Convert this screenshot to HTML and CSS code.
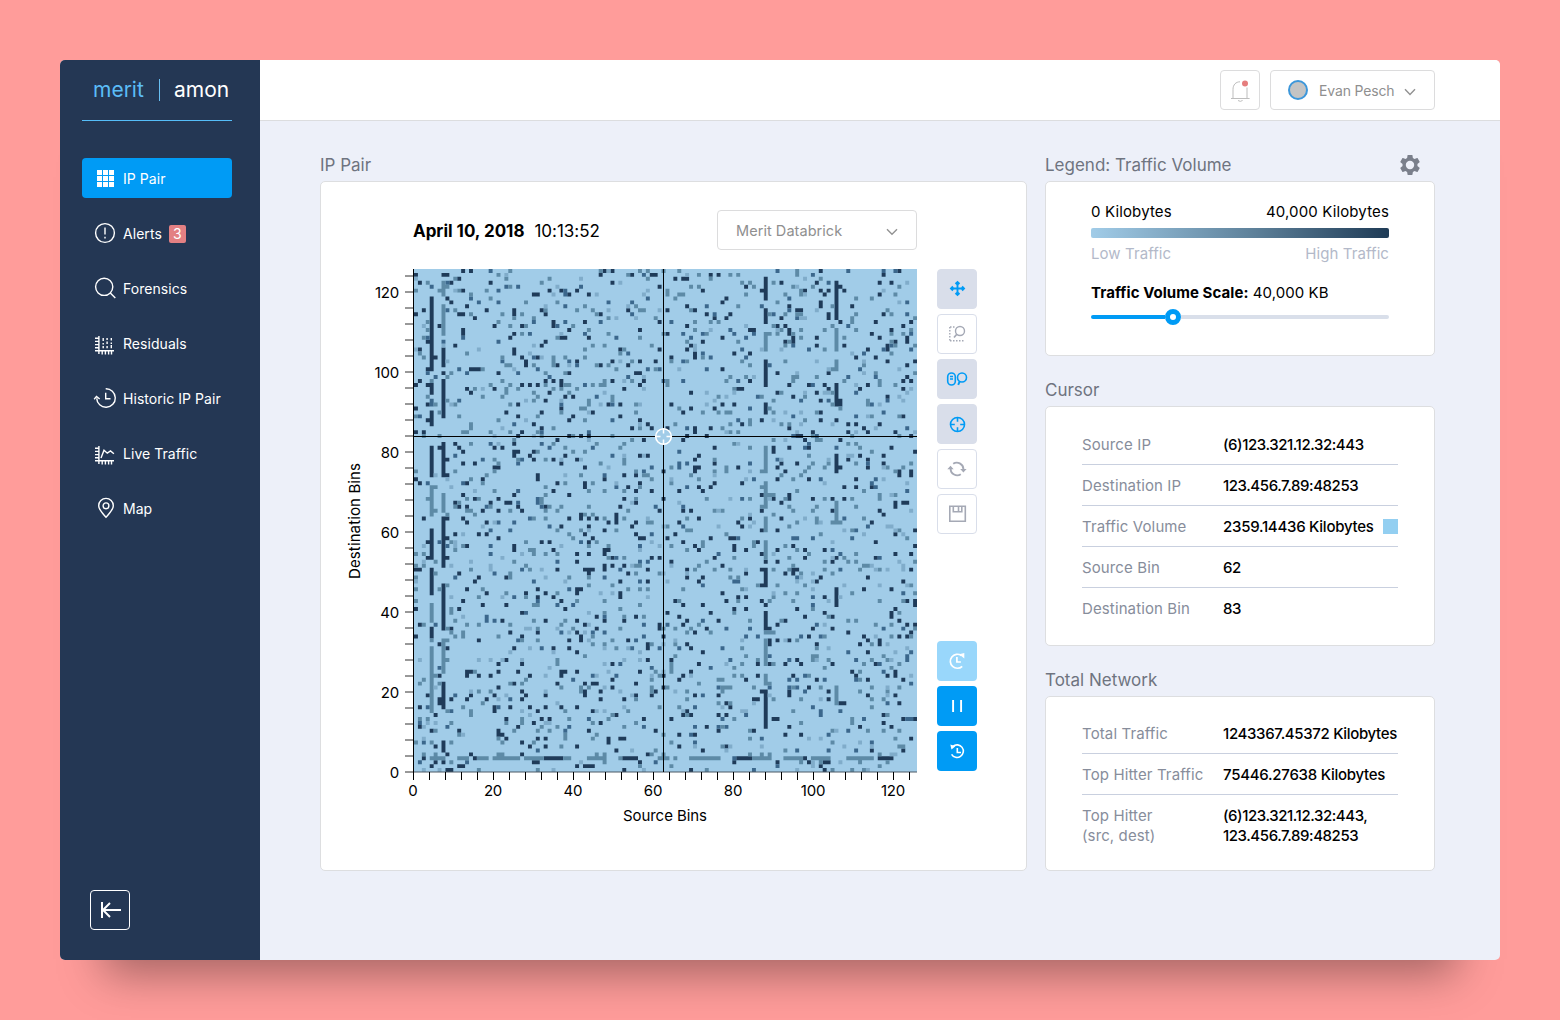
FILE: index.html
```html
<!DOCTYPE html>
<html lang="en">
<head>
<meta charset="utf-8">
<title>Merit Amon – IP Pair</title>
<link rel="stylesheet" href="styles.css">
</head>
<body>
<div class="app">
  <aside class="sidebar">
    <div class="logo"><span class="logo-merit">merit</span><span class="logo-sep"></span><span class="logo-amon">amon</span></div>
    <nav class="nav">
      <a class="nav-item active">
        <svg class="nav-icon" viewBox="0 0 24 24"><g fill="#fff"><path d="M4 4h5v5H4zM10 4h5v5h-5zM16 4h5v5h-5zM4 10h5v5H4zM10 10h5v5h-5zM16 10h5v5h-5zM4 16h5v5H4zM10 16h5v5h-5zM16 16h5v5h-5z"/></g></svg>
        IP Pair</a>
      <a class="nav-item">
        <svg class="nav-icon" viewBox="0 0 24 24"><circle cx="12" cy="12" r="9.4"/><path d="M12 6.5v7M12 15.8v1.700"/></svg>
        Alerts<span class="badge">3</span></a>
      <a class="nav-item">
        <svg class="nav-icon" viewBox="0 0 24 24"><circle cx="11.2" cy="10.8" r="8.6"/><path d="M17.3 16.9l5 5"/></svg>
        Forensics</a>
      <a class="nav-item">
        <svg class="nav-icon shift" viewBox="0 0 24 24"><path d="M5.9 3v18M2 17.8h19M2 5.200h4M2 8.400h4M2 11.600h4M2 14.800h4M9.2 18v3.500M12.4 18v3.500M15.6 18v3.500M18.500 18v3.500"/><path d="M10.2 5v3M10.2 10v1.6M10.2 13v2.2M14.1 5v2M14.1 8.5v2.6M14.1 13v2.2M18.3 5v2.6M18.3 9.4v1.6M18.3 12v3.2"/></svg>
        Residuals</a>
      <a class="nav-item">
        <svg class="nav-icon" viewBox="0 0 24 24"><path d="M12.7 2.700a9.3 9.3 0 1 1-9 9.700M1.200 13.200l2.300-2.800 3.200 2.600M12.7 6.800v6h4.8"/></svg>
        Historic IP Pair</a>
      <a class="nav-item">
        <svg class="nav-icon shift" viewBox="0 0 24 24"><path d="M5.9 3v18M2 17.800h19M2 5.200h4M2 8.400h4M2 11.600h4M2 14.800h4M9.2 18v3.500M12.4 18v3.500M15.6 18v3.500M18.500 18v3.500"/><path d="M8 15l3-7.8 3.3 3 3.2-2.2 3.4 2.8"/></svg>
        Live Traffic</a>
      <a class="nav-item">
        <svg class="nav-icon" viewBox="0 0 24 24"><path d="M13 21.3c-4-4.6-7.3-7.7-7.3-11.6a7.3 7.3 0 0 1 14.6 0c0 3.900-3.300 7-7.300 11.600z"/><circle cx="13" cy="9.800" r="2.900"/></svg>
        Map</a>
    </nav>
    <button class="collapse"><svg width="24" height="24" viewBox="0 0 24 24"><path d="M4 4v16M5 12h18M12 5l-7 7 7 7"/></svg></button>
  </aside>

  <div class="page">
    <header class="topbar">
      <button class="bell"><svg width="24" height="24" viewBox="0 0 24 24"><path d="M5 20v-8.500c0-4.800 2.900-7.700 7-7.700M19 9.500v10.500M3 20.500h18.600M10 22.500q2.300 1.700 4.600 0"/><circle cx="17" cy="5.600" r="3"/></svg></button>
      <button class="user"><span class="avatar"></span><span class="user-name">Evan Pesch</span><svg class="chev" width="12" height="8" viewBox="0 0 12 8"><path d="M1 1.200l5 5.300 5-5.300"/></svg></button>
    </header>

    <main class="content">
      <section class="pair">
        <h2 class="title">IP Pair</h2>
        <div class="card chart-card">
          <div class="chart-head">
            <p class="stamp"><b>April 10, 2018</b><span>10:13:52</span></p>
            <button class="select"><span>Merit Databrick</span><svg class="chev" width="12" height="8" viewBox="0 0 12 8"><path d="M1 1.200l5 5 5-5"/></svg></button>
          </div>
          <div class="chart-body">
            <svg class="chart" width="576" height="560" viewBox="341 269 576 560">
              <rect x="413" y="269" width="504" height="503" fill="#a1cce8"/>
              <g id="cells"></g>
              <path class="base-line" d="M413 772h504"/>
              <path id="y-ticks" class="y-ticks"/>
              <path id="x-ticks" class="x-ticks"/>
              <path class="axis" d="M413.500 269v503.500"/>
              <path class="axis" d="M663.500 269v503M413 436.500h504"/>
              <g id="labels" class="labels"></g>
              <text class="axis-name" x="665" y="821" textLength="84">Source Bins</text>
              <text class="axis-name" x="0" y="0" textLength="116" transform="translate(360 521) rotate(-90)">Destination Bins</text>
              <circle cx="663.500" cy="436.500" r="7.800" fill="#a1cce8" stroke="#fff" stroke-width="1.600"/>
              <path d="M663.500 429v4.500M663.500 439.500v4.500M656 436.500h4.500M666.500 436.500h4.500" stroke="#fff" stroke-width="1.500"/>
            </svg>
            <div class="tools">
              <button class="tool on"><svg viewBox="0 0 24 24"><path d="M12.500 5v13M6 11.500h13M10.500 7l2-2 2 2M10.500 16l2 2 2-2M8 9.500l-2 2 2 2M17 9.500l2 2-2 2" stroke-width="1.900"/></svg></button>
              <button class="tool"><svg viewBox="0 0 24 24"><path d="M5 5h5M4.800 5v14.500M5 18.700h15" stroke-dasharray="1.500 1.500"/><circle cx="15" cy="9" r="4.500"/><path d="M11.800 12.200L9 15.500" stroke-width="1.700"/></svg></button>
              <button class="tool on"><svg viewBox="0 0 24 24"><rect x="2.700" y="6" width="7.600" height="12" rx="3.800"/><path d="M5 9.500h3M5 12h3"/><circle cx="17" cy="10.500" r="4.500"/><path d="M14.700 14.300l-1.500 3.500" stroke-width="1.900"/></svg></button>
              <button class="tool on"><svg viewBox="0 0 24 24"><circle cx="12.500" cy="12.500" r="7"/><path d="M12.500 5.500v4.300M12.500 15.200v4.300M5.500 12.500h4.300M15.200 12.500h4.300"/></svg></button>
              <button class="tool"><svg viewBox="0 0 24 24"><path d="M8.200 6.800a6.600 6.600 0 0 1 10.200 5.200M15.800 17.200a6.600 6.600 0 0 1-10.200-5.500" stroke-width="1.900"/><path d="M2.300 12.300h6.400L5.500 8.800zM15.200 12h6.400l-3.200 3.600z" fill="#a5a9b5" stroke="none"/></svg></button>
              <button class="tool"><svg viewBox="0 0 24 24"><path d="M4.800 4.200h15.500v15H4.800zM8.300 4.200v5.500h8.500V4.200M13.500 4.700v4.500" stroke-width="1.600"/></svg></button>
              <span class="spring"></span>
              <button class="tool blue faded"><svg viewBox="0 0 24 24"><path d="M17.200 17.300A7 7 0 1 1 16.300 6.500M11.900 8v5h4" stroke-width="1.700"/><path d="M14 5.200l5.300-1.200v5.600z" fill="#fff" stroke="none"/></svg></button>
              <button class="tool blue"><svg viewBox="0 0 24 24"><path d="M8.100 6v12M16.100 6v12" stroke-width="1.900"/></svg></button>
              <button class="tool blue"><svg viewBox="0 0 24 24"><path d="M8 7.300a6.300 6.300 0 1 1-1.400 8M12.300 9v4.500H16" stroke-width="1.600"/><path d="M5.300 5.400l1.200 5 4-3.200z" fill="#fff" stroke="none"/></svg></button>
            </div>
          </div>
        </div>
      </section>

      <div class="side">
        <section>
          <div class="title-row"><h2 class="title">Legend: Traffic Volume</h2>
            <svg class="gear" width="24" height="24" viewBox="0 0 24 24"><path d="M19.430 12.980c.04-.32.07-.64.07-.98s-.03-.66-.07-.98l2.110-1.650c.19-.15.24-.42.12-.64l-2-3.460c-.12-.22-.39-.3-.61-.22l-2.490 1c-.52-.4-1.080-.73-1.690-.98l-.38-2.650C14.460 2.180 14.250 2 14 2h-4c-.25 0-.46.18-.49.42l-.38 2.650c-.61.25-1.170.59-1.690.98l-2.490-1c-.23-.09-.49 0-.61.22l-2 3.460c-.13.22-.07.49.12.64l2.110 1.650c-.04.32-.07.65-.07.98s.03.66.07.98l-2.110 1.650c-.19.15-.24.42-.12.64l2 3.460c.12.22.39.3.61.22l2.490-1c.52.4 1.080.73 1.690.98l.38 2.650c.03.24.24.42.49.42h4c.25 0 .46-.18.49-.42l.38-2.650c.61-.25 1.170-.59 1.690-.98l2.490 1c.23.09.49 0 .61-.22l2-3.460c.12-.22.07-.49-.12-.64l-2.110-1.650zM12 16.200a4.200 4.200 0 1 1 0-8.400 4.200 4.200 0 0 1 0 8.400z"/></svg>
          </div>
          <div class="card legend">
            <div class="ends"><span class="wide">0 Kilobytes</span><span class="wide">40,000 Kilobytes</span></div>
            <div class="ramp"></div>
            <div class="ends hint"><span>Low Traffic</span><span>High Traffic</span></div>
            <p class="scale"><b>Traffic Volume Scale:</b> 40,000 KB</p>
            <div class="slider"><span class="fill"></span><span class="knob"></span><span class="rest"></span></div>
          </div>
        </section>

        <section>
          <h2 class="title">Cursor</h2>
          <dl class="card facts cursor">
            <div class="row"><dt>Source IP</dt><dd class="t3">(6)123.321.12.32:443</dd></div>
            <div class="row"><dt>Destination IP</dt><dd class="t3">123.456.7.89:48253</dd></div>
            <div class="row"><dt>Traffic Volume</dt><dd class="t1">2359.14436 Kilobytes</dd><span class="swatch"></span></div>
            <div class="row"><dt>Source Bin</dt><dd class="t3">62</dd></div>
            <div class="row"><dt>Destination Bin</dt><dd class="t3">83</dd></div>
          </dl>
        </section>

        <section>
          <h2 class="title">Total Network</h2>
          <dl class="card facts total">
            <div class="row"><dt>Total Traffic</dt><dd class="t2">1243367.45372 Kilobytes</dd></div>
            <div class="row"><dt>Top Hitter Traffic</dt><dd class="t1">75446.27638 Kilobytes</dd></div>
            <div class="row tall"><dt>Top Hitter<br>(src, dest)</dt><dd class="t3">(6)123.321.12.32:443,<br>123.456.7.89:48253</dd></div>
          </dl>
        </section>
      </div>
    </main>
  </div>
</div>
<script src="chart.js"></script>
</body>
</html>
```
FILE: styles.css
```css
* { box-sizing: border-box; }
body { margin: 0; padding: 60px; height: 1020px; overflow: hidden; background: #ff9c9a; font: 400 15px/20px Inter, "Liberation Sans", sans-serif; color: #000; }
h2, p, dl, dd, dt { margin: 0; font-weight: 400; }
button { padding: 0; font: inherit; display: flex; align-items: center; justify-content: center; }
svg { display: block; fill: none; }

.app { display: flex; width: 1440px; height: 900px; border-radius: 5px; background: #edf0f9; box-shadow: 0 58px 42px -44px rgba(0, 0, 0, .36); }

.sidebar { width: 200px; background: #243754; border-radius: 5px 0 0 5px; padding: 0 28px 30px 22px; display: flex; flex-direction: column; color: #fff; }
.logo { height: 61px; border-bottom: 1px solid #55bdf9; display: flex; align-items: center; padding: 0 0 0 11px; font-size: 21px; }
.logo-merit { color: #5bbcf7; width: 66px; }
.logo-sep { width: 1px; height: 22px; background: #68bff2; margin-right: 14px; }
.nav { display: flex; flex-direction: column; gap: 15px; margin-top: 37px; flex: 1; }
.nav-item { height: 40px; border-radius: 4px; display: flex; align-items: center; padding: 2px 0 0 11px; font-size: 14px; letter-spacing: .05px; white-space: nowrap; }
.nav-item.active { background: #009bf5; }
.nav-icon { width: 24px; height: 24px; margin: -2px 6px 0 0; stroke: #fff; stroke-width: 1.4; }
.nav-icon.shift { margin-top: 1px; }
.active .nav-icon { stroke: none; }
.badge { width: 17px; height: 18px; margin: 0 0 0 7px; border-radius: 2px; background: #e38083; display: flex; align-items: center; justify-content: center; line-height: 18px; }
.collapse { width: 40px; height: 40px; margin-left: 8px; background: none; border: 1px solid #fff; border-radius: 4px; }
.collapse svg { stroke: #fff; stroke-width: 2; margin-left: -1px; }

.page { flex: 1; display: flex; flex-direction: column; }
.topbar { height: 61px; background: #fff; border-bottom: 1px solid #dcdddf; border-radius: 0 5px 0 0; display: flex; justify-content: flex-end; align-items: center; gap: 10px; padding-right: 65px; }
.bell, .user, .select { height: 40px; background: #fff; border: 1px solid #dcdcdd; border-radius: 4px; color: #8f8f8f; }
.bell { width: 40px; }
.bell path { stroke: #bdbdbd; stroke-width: 1; }
.bell circle { fill: #e57d7d; }
.user { width: 165px; justify-content: flex-start; padding-left: 17px; font-size: 14px; letter-spacing: -.15px; }
.avatar { width: 20px; height: 20px; border-radius: 50%; border: 2px solid #3d97da; background: #c4c4c4; margin-right: 11px; }
.user-name { width: 85px; text-align: left; padding-top: 1px; }
.chev { stroke: #929292; stroke-width: 1.4; margin-top: 3px; }

.content { display: flex; gap: 18px; padding: 29px 65px 0 60px; }
.title { font-size: 17px; line-height: 31px; height: 31px; color: #6f7480; }
.card { background: #fff; border: 1px solid #dddee0; border-radius: 5px; }
.pair { width: 707px; }
.chart-card { height: 690px; padding: 28px 49px 0 20px; }
.chart-head { display: flex; justify-content: space-between; padding: 0 60px 0 72px; height: 59px; }
.stamp { font-size: 17px; line-height: 43px; display: flex; gap: 10px; letter-spacing: -.02px; }
.select { width: 200px; justify-content: space-between; padding: 0 18px; font-size: 14.5px; letter-spacing: .05px; }
.select span { padding-top: 2px; }
.chart-body { display: flex; gap: 20px; }
.chart { flex: none; }
.axis { stroke: #000; stroke-width: 1; }
.base-line { stroke: #4d5a66; stroke-width: 1; }
.y-ticks { stroke: #333; stroke-width: 1; }
.x-ticks { stroke: #000; stroke-width: 1; }
.labels, .axis-name { font-size: 15px; fill: #000; }
.labels { letter-spacing: -.2px; }
.axis-name { text-anchor: middle; }
.tools { width: 40px; height: 502px; display: flex; flex-direction: column; gap: 5px; }
.tool { width: 40px; height: 40px; flex: none; border: 1px solid #d9deea; border-radius: 4px; background: #fff; }
.tool svg { width: 24px; height: 24px; stroke: #a5a9b5; stroke-width: 1.4; }
.tool.on { background: #d9deea; }
.tool.on svg { stroke: #009bf5; stroke-width: 1.6; }
.tool.blue { background: #009bf5; border: 0; }
.tool.blue svg { stroke: #fff; }
.tool.faded { background: #99d7fb; }
.spring { flex: 1; }

.side { width: 390px; display: flex; flex-direction: column; gap: 19px; }
.title-row { display: flex; justify-content: space-between; align-items: center; padding-right: 13px; }
.gear { fill: #7a7f8b; margin-top: -2px; }
.legend { height: 175px; padding: 20px 45px 0; }
.ends { display: flex; justify-content: space-between; }
.wide { letter-spacing: .14px; }
.ramp { height: 10px; margin: 6px 0; border-radius: 2px; background: linear-gradient(90deg, #a1cce8, #5d8099 55%, #1f3b56); }
.hint { color: #b3b9c9; letter-spacing: .08px; }
.scale { margin-top: 19px; letter-spacing: .06px; }
.slider { display: flex; align-items: center; height: 16px; margin-top: 6px; }
.fill { width: 74px; height: 4px; border-radius: 2px 0 0 2px; background: #009bf5; }
.knob { width: 16px; height: 16px; border: 5px solid #009bf5; border-radius: 50%; background: #fff; }
.rest { flex: 1; height: 4px; border-radius: 0 2px 2px 0; background: #d9dfea; }

.facts { padding: 17px 36px 0; }
.cursor { height: 240px; }
.total { height: 175px; padding-top: 16px; }
.row { display: flex; align-items: center; height: 41px; padding-top: 2px; border-bottom: 1px solid #c9d0df; }
.row:last-child { border-bottom: 0; padding-top: 1px; }
.row.tall { height: 60px; padding-top: 2px; }
.row dt { width: 141px; color: #878d9b; letter-spacing: .12px; }
.row dd { font-weight: 450; white-space: nowrap; }
.t1 { letter-spacing: -.26px; }
.t2 { letter-spacing: -.34px; }
.t3 { letter-spacing: -.43px; }
.swatch { width: 15px; height: 15px; margin: -2px 0 0 auto; background: #93cff1; }
```
FILE: chart.js
```js
const NS = 'http://www.w3.org/2000/svg';
const X0 = 414, Y0 = 269, SIZE = 3.93, N = 128;
const DARK = '#1f3b59', BLUE = '#3b678c', MID = '#5d8aa6', PALE = '#80acca';

// Deterministic generator, so the traffic sample is the same on every load.
let seed = 20180410;
function rnd() {
  seed = (seed + 0x6d2b79f5) | 0;
  let t = Math.imul(seed ^ (seed >>> 15), 1 | seed);
  t = (t + Math.imul(t ^ (t >>> 7), 61 | t)) ^ t;
  return ((t ^ (t >>> 14)) >>> 0) / 4294967296;
}

const grid = {};
for (let y = 0; y < N; y++) {
  for (let x = 0; x < N; x++) {
    if (rnd() < 0.13) {
      const k = rnd();
      grid[x + ',' + y] = k < 0.37 ? DARK : k < 0.52 ? BLUE : k < 0.86 ? MID : PALE;
    }
  }
}

// Busy source bins: [column, from y, to y, colour] in chart pixels.
const busy = [
  [4, 297, 371, DARK], [4, 382, 396, DARK], [4, 400, 407, BLUE], [4, 411, 426, DARK],
  [4, 445, 477, DARK], [4, 485, 518, MID], [4, 528, 558, DARK], [4, 568, 597, DARK],
  [4, 604, 622, MID], [4, 626, 640, DARK], [4, 645, 712, MID],
  [7, 281, 297, MID], [7, 305, 335, MID], [7, 348, 367, DARK], [7, 379, 417, DARK],
  [7, 440, 478, DARK], [7, 492, 512, MID], [7, 518, 566, DARK], [7, 585, 632, DARK],
  [7, 640, 672, MID], [7, 682, 709, DARK], [7, 740, 752, DARK],
  [89, 277, 302, DARK], [89, 308, 325, DARK], [89, 333, 352, MID], [89, 361, 386, DARK],
  [89, 402, 414, DARK], [89, 445, 473, MID], [89, 481, 508, MID], [89, 516, 532, MID],
  [89, 540, 558, MID], [89, 566, 588, DARK], [89, 612, 632, DARK], [89, 640, 664, MID],
  [89, 672, 684, MID], [89, 690, 730, DARK],
  [107, 281, 320, DARK], [107, 328, 350, MID], [107, 360, 372, MID], [107, 384, 408, DARK],
  [107, 452, 472, DARK], [107, 500, 524, MID], [107, 592, 608, DARK], [107, 684, 704, MID]
];
for (const [col, a, b, c] of busy) {
  for (let y = Math.round((a - Y0) / SIZE); y < Math.round((b - Y0) / SIZE); y++) grid[col + ',' + y] = c;
}
// Busy destination bin near the bottom: [from column, to column, colour].
const band = [[4, 8, MID], [11, 14, MID], [16, 19, MID], [21, 27, MID], [28, 33, MID], [33, 38, DARK],
  [38, 40, MID], [44, 49, MID], [53, 57, DARK], [62, 65, MID], [70, 78, MID], [82, 86, DARK],
  [86, 91, MID], [94, 99, MID], [101, 106, MID], [110, 117, MID], [119, 122, DARK]];
for (const [a, b, c] of band) for (let x = a; x < b; x++) grid[x + ',124'] = c;

const paths = {};
for (const key in grid) {
  const [x, y] = key.split(',').map(Number);
  const px = (X0 + x * SIZE).toFixed(2), py = (Y0 + y * SIZE).toFixed(2);
  paths[grid[key]] = (paths[grid[key]] || '') + `M${px} ${py}h${SIZE}v${SIZE}h-${SIZE}z`;
}
for (const colour in paths) {
  const p = document.createElementNS(NS, 'path');
  p.setAttribute('d', paths[colour]);
  p.setAttribute('fill', colour);
  document.getElementById('cells').append(p);
}

let xt = '', yt = '';
for (let i = 0; i < 32; i++) {
  xt += `M${413.5 + i * 16} 772v8`;
  yt += `M405 ${772 - i * 16}h8`;
}
document.getElementById('x-ticks').setAttribute('d', xt);
document.getElementById('y-ticks').setAttribute('d', yt);

function label(text, x, y, anchor) {
  const t = document.createElementNS(NS, 'text');
  t.setAttribute('x', x);
  t.setAttribute('y', y);
  t.setAttribute('text-anchor', anchor);
  t.textContent = text;
  document.getElementById('labels').append(t);
}
for (let v = 0; v <= 120; v += 20) {
  label(v, 399, 777.5 - v * 4, 'end');
  label(v, 413 + v * 4, 796, 'middle');
}
```
